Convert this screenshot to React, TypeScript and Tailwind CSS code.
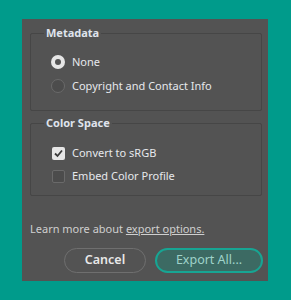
import React from "react";

export default function App() {
  const font = { fontFamily: '"Noto Sans", "Open Sans", sans-serif' };
  return (
    <div className="w-[291px] h-[300px] bg-[#009b8b] pt-[19px] pl-[22px]" style={font}>
      <div className="w-[246px] h-[262px] bg-[#535353] flex flex-col pl-[8px] pr-[6px] pt-[7px] text-[#e6e8ec]">
        <fieldset className="border border-[#464646] rounded-[2px] h-[85px] pl-[20px] pr-[10px] m-0">
          <legend className="px-[2px] -ml-[7px] text-[11px] font-bold leading-[14px] text-[#dfe3ec]">Metadata</legend>
          <div className="flex flex-col gap-[10px] pt-[15px]">
            <label className="flex items-center gap-[7px] text-[11px] leading-[14px]">
              <span className="w-[14px] h-[14px] rounded-full bg-[#e6e6e6] flex items-center justify-center">
                <span className="w-[6px] h-[6px] rounded-full bg-[#535353]" />
              </span>
              None
            </label>
            <label className="flex items-center gap-[7px] text-[11px] leading-[14px]">
              <span className="w-[14px] h-[14px] rounded-full border border-[#6a6a6a] bg-[#4c4c4c]" />
              Copyright and Contact Info
            </label>
          </div>
        </fieldset>
        <fieldset className="border border-[#464646] rounded-[2px] h-[80px] pl-[21px] pr-[10px] m-0 mt-[5px]">
          <legend className="px-[2px] -ml-[8px] text-[11px] font-bold leading-[14px] text-[#dfe3ec]">Color Space</legend>
          <div className="flex flex-col gap-[9px] pt-[16px]">
            <label className="flex items-center gap-[7px] text-[11px] leading-[14px]">
              <span className="w-[13px] h-[13px] rounded-[2px] bg-[#e6e6e6] flex items-center justify-center">
                <svg width="9" height="9" viewBox="0 0 9 9">
                  <path d="M1 4.5 L3.5 7 L8 1.5" stroke="#3a3a3a" strokeWidth="1.8" fill="none" />
                </svg>
              </span>
              Convert to sRGB
            </label>
            <label className="flex items-center gap-[7px] text-[11px] leading-[14px]">
              <span className="w-[13px] h-[13px] rounded-[2px] border border-[#6a6a6a] bg-[#4c4c4c]" />
              Embed Color Profile
            </label>
          </div>
        </fieldset>
        <p className="mt-[26px] text-[11px] leading-[14px] text-[#cfcfcf]">
          Learn more about <span className="underline">export options.</span>
        </p>
        <div className="flex justify-end gap-[9px] mt-[12px] -mr-[1px]">
          <button className="w-[82px] h-[25px] rounded-full border border-[#6f6f6f] text-[12.5px] font-semibold text-[#e8e8e8]">Cancel</button>
          <button className="w-[108px] h-[25px] rounded-full border-2 border-[#17a593] bg-[#3c6a63] text-[12.5px] text-[#9fd3ca]">Export All...</button>
        </div>
      </div>
    </div>
  );
}
